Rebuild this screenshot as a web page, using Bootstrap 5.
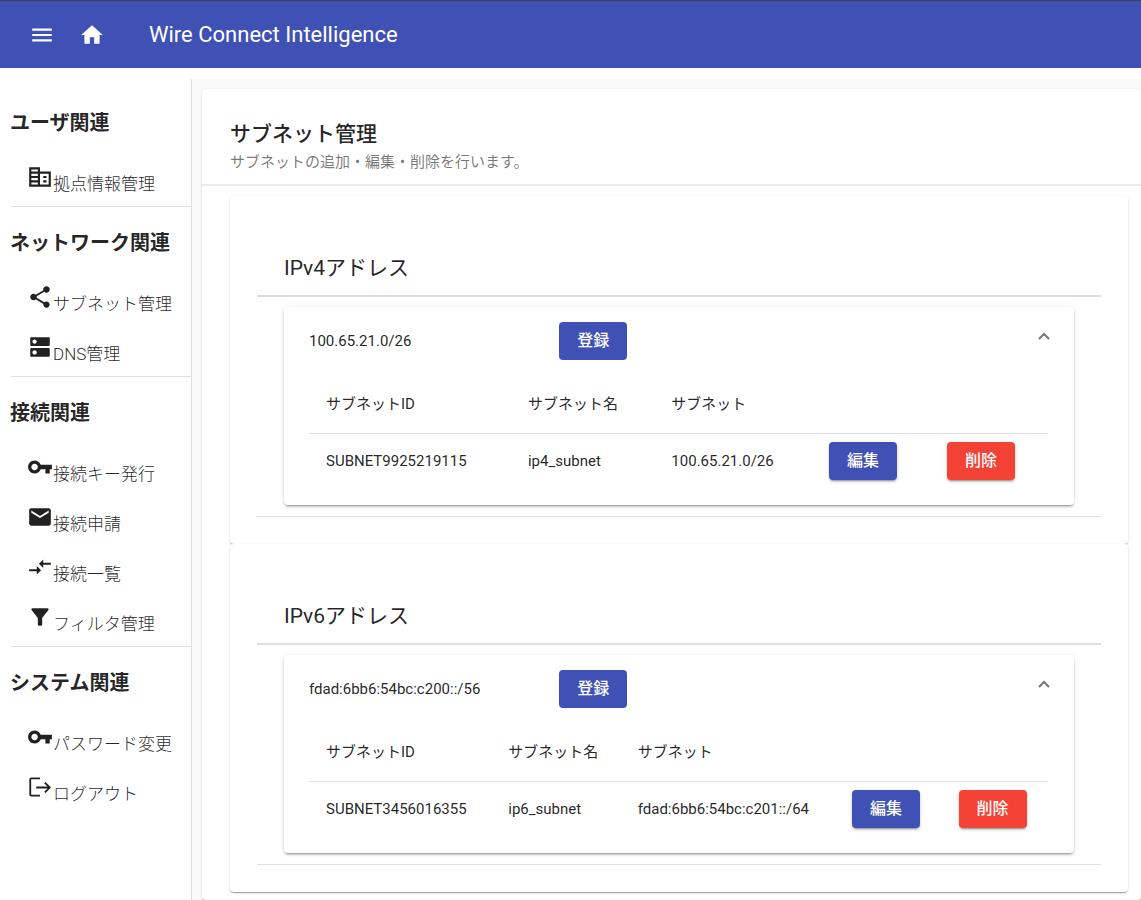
<!DOCTYPE html>
<html lang="ja">
<head>
<meta charset="utf-8">
<meta name="viewport" content="width=device-width, initial-scale=1">
<title>Wire Connect Intelligence</title>
<link href="https://cdn.jsdelivr.net/npm/bootstrap@5.3.0/dist/css/bootstrap.min.css" rel="stylesheet">
<style>
  body { font-family: Roboto, "Noto Sans CJK JP", sans-serif; font-size: 15px; line-height: 20px; color: rgba(0,0,0,.87); background: #fff; }
  svg { display: block; fill: currentColor; flex: none; }
  .topbar { background: #3f51b5; border-top: 1px solid #3b4151; height: 68px; padding: 0 29px; color: #fff; }
  .topbar .icon-btn { padding: 0; border: 0; background: none; color: inherit; }
  .brand { font-size: 22px; line-height: 28px; font-weight: 400; color: inherit; margin-left: 44px; }
  .brand, .side-link { text-decoration: none; }
  .shell { margin-top: 11px; min-height: calc(100vh - 79px); }
  .sidebar { width: 192px; flex: none; padding: 8px 0 0 10px; border-right: 1px solid #e0e0e0; }
  .side-group { border-bottom: 1px solid #e0e0e0; margin-left: 1px; }
  .side-group:last-child { border-bottom: 0; }
  .side-group h2 { font-size: 20px; line-height: 24px; font-weight: 700; margin: 0 0 0 -1px; padding: 24px 0 21px; white-space: nowrap; }
  .side-link { display: flex; height: 50px; padding: 8px 0 0 16px; color: rgba(0,0,0,.87); font-size: 17px; line-height: 24px; font-weight: 300; white-space: nowrap; }
  .side-link span { padding-top: 8px; }
  .content-area { background: #fafafa; padding: 10px 0 0 10px; min-width: 0; }
  .sheet { background: #fff; border-radius: 4px; box-shadow: 0 2px 1px -1px rgba(0,0,0,.2), 0 1px 1px rgba(0,0,0,.14), 0 1px 3px rgba(0,0,0,.12); }
  .page-sheet { min-height: 100%; }
  .page-head { padding: 31px 28px 10px; border-bottom: 2px solid #ececec; }
  .page-head h1, .block-title { font-size: 21px; line-height: 28px; font-weight: 400; margin: 0; }
  .page-head h1 { font-weight: 500; }
  .page-head p { margin: 0; line-height: 24px; color: rgba(0,0,0,.54); padding-top: 2px; }
  .blocks { padding: 10px 13px 8px 28px; }
  .block-sheet { padding: 58px 27px 27px; }
  .block-title { padding: 0 27px 13px; border-bottom: 2px solid #dedede; }
  .block-body { padding: 10px 27px 11px; border-bottom: 1px solid #e0e0e0; }
  .panel { border-radius: 4px; background: #fff; padding: 0 26px 16px 25px; box-shadow: 0 3px 1px -2px rgba(0,0,0,.2), 0 2px 2px rgba(0,0,0,.14), 0 1px 5px rgba(0,0,0,.12); }
  .panel-head { height: 68px; }
  .chevron { border: 0; background: none; padding: 0 0 10px; color: rgba(0,0,0,.54); }
  .action { width: 68px; height: 38px; padding: 0; border: 0; border-radius: 4px; color: #fff; font-size: 16px; line-height: 24px; font-weight: 500; box-shadow: 0 3px 1px -2px rgba(0,0,0,.2), 0 2px 2px rgba(0,0,0,.14), 0 1px 5px rgba(0,0,0,.12); }
  .action:hover { color: #fff; filter: brightness(1.1); }
  .action-main { background: #3f51b5; }
  .action-warn { background: #f44336; }
  .panel-head .action { box-shadow: none; }
  .subnets { margin: 0; width: 100%; }
  .subnets th, .subnets td { padding: 0 17px; vertical-align: middle; text-align: left; white-space: nowrap; }
  .subnets th { height: 58px; font-weight: 400; border-bottom: 1px solid #e0e0e0; }
  .subnets td { height: 56px; }
</style>
</head>
<body>
<header class="topbar d-flex align-items-center">
  <button class="icon-btn" type="button" aria-label="メニュー"><svg width="26" height="26" viewBox="0 0 24 24"><path d="M3 18h18v-2H3v2zm0-5h18v-2H3v2zm0-7v2h18V6H3z"/></svg></button>
  <button class="icon-btn ms-4" type="button" aria-label="ホーム"><svg width="26" height="26" viewBox="0 0 24 24"><path d="M10 20v-6h4v6h5v-8h3L12 3 2 12h3v8z"/></svg></button>
  <a class="brand" href="#">Wire Connect Intelligence</a>
</header>

<div class="shell d-flex">
  <nav class="sidebar" aria-label="メインメニュー">
    <section class="side-group">
      <h2>ユーザ関連</h2>
      <a class="side-link" href="#"><svg width="26" height="26" viewBox="0 0 24 24"><path fill-rule="evenodd" d="M2 3h10v4h10v14H2V3zM4 5v2h6V5H4zm0 4v2h6V9H4zm0 4v2h6v-2H4zm0 4v2h6v-2H4zM12 9v10h8V9h-8zM15 11h3v2h-3v-2zm0 4h3v2h-3v-2z"/></svg><span>拠点情報管理</span></a>
    </section>
    <section class="side-group">
      <h2>ネットワーク関連</h2>
      <a class="side-link" href="#"><svg width="26" height="26" viewBox="0 0 24 24"><path d="M18 16.08c-.76 0-1.44.3-1.96.77L8.91 12.7c.05-.23.09-.46.09-.7s-.04-.47-.09-.7l7.05-4.11c.54.5 1.25.81 2.04.81 1.66 0 3-1.34 3-3s-1.34-3-3-3-3 1.34-3 3c0 .24.04.47.09.7L8.04 9.81C7.5 9.31 6.79 9 6 9c-1.66 0-3 1.34-3 3s1.34 3 3 3c.79 0 1.5-.31 2.04-.81l7.12 4.16c-.05.21-.08.43-.08.65 0 1.61 1.31 2.92 2.92 2.92s2.92-1.31 2.92-2.92-1.31-2.92-2.92-2.92z"/></svg><span>サブネット管理</span></a>
      <a class="side-link" href="#"><svg width="26" height="26" viewBox="0 0 24 24"><path d="M20 13H4c-.55 0-1 .45-1 1v6c0 .55.45 1 1 1h16c.55 0 1-.45 1-1v-6c0-.55-.45-1-1-1zM7 19c-1.1 0-2-.9-2-2s.9-2 2-2 2 .9 2 2-.9 2-2 2zM20 3H4c-.55 0-1 .45-1 1v6c0 .55.45 1 1 1h16c.55 0 1-.45 1-1V4c0-.55-.45-1-1-1zM7 9c-1.1 0-2-.9-2-2s.9-2 2-2 2 .9 2 2-.9 2-2 2z"/></svg><span>DNS管理</span></a>
    </section>
    <section class="side-group">
      <h2>接続関連</h2>
      <a class="side-link" href="#"><svg width="26" height="26" viewBox="0 0 24 24"><path d="M12.65 10C11.83 7.67 9.61 6 7 6c-3.31 0-6 2.69-6 6s2.69 6 6 6c2.61 0 4.83-1.67 5.65-4H17v4h4v-4h2v-4H12.65zM7 15c-1.65 0-3-1.35-3-3s1.35-3 3-3 3 1.35 3 3-1.35 3-3 3z"/></svg><span>接続キー発行</span></a>
      <a class="side-link" href="#"><svg width="26" height="26" viewBox="0 0 24 24"><path d="M20 4H4c-1.1 0-2 .9-2 2v12c0 1.1.9 2 2 2h16c1.1 0 2-.9 2-2V6c0-1.1-.9-2-2-2zm0 4l-8 5-8-5V6l8 5 8-5v2z"/></svg><span>接続申請</span></a>
      <a class="side-link" href="#"><svg width="26" height="26" viewBox="0 0 24 24"><path d="M9.01 14H2v2h7.01v3L13 15l-3.99-4v3zm5.98-1v-3H22V8h-7.01V5L11 9l3.99 4z"/></svg><span>接続一覧</span></a>
      <a class="side-link" href="#"><svg width="26" height="26" viewBox="0 0 24 24"><path d="M4.25 5.61C6.27 8.2 10 13 10 13v6c0 .55.45 1 1 1h2c.55 0 1-.45 1-1v-6s3.72-4.8 5.74-7.39c.51-.66.04-1.61-.79-1.61H5.04c-.83 0-1.3.95-.79 1.61z"/></svg><span>フィルタ管理</span></a>
    </section>
    <section class="side-group">
      <h2>システム関連</h2>
      <a class="side-link" href="#"><svg width="26" height="26" viewBox="0 0 24 24"><path d="M12.65 10C11.83 7.67 9.61 6 7 6c-3.31 0-6 2.69-6 6s2.69 6 6 6c2.61 0 4.83-1.67 5.65-4H17v4h4v-4h2v-4H12.65zM7 15c-1.65 0-3-1.35-3-3s1.35-3 3-3 3 1.35 3 3-1.35 3-3 3z"/></svg><span>パスワード変更</span></a>
      <a class="side-link" href="#"><svg width="26" height="26" viewBox="0 0 24 24"><path d="M12 4H4Q3 4 3 5V19Q3 20 4 20H12M8.500 12.500H21M16.500 8L21 12.500l-4.500 4.500" fill="none" stroke="currentColor" stroke-width="1.700"/></svg><span>ログアウト</span></a>
    </section>
  </nav>

  <main class="content-area flex-grow-1">
    <div class="sheet page-sheet">
      <div class="page-head">
        <h1>サブネット管理</h1>
        <p>サブネットの追加・編集・削除を行います。</p>
      </div>
      <div class="blocks">
        <section class="sheet block-sheet">
          <h2 class="block-title">IPv4アドレス</h2>
          <div class="block-body">
            <div class="panel">
              <div class="panel-head d-flex align-items-center">
                <div class="col-4">100.65.21.0/26</div>
                <button class="btn action action-main ms-1" type="button">登録</button>
                <button class="chevron ms-auto" type="button" aria-label="閉じる" aria-expanded="true"><svg width="8" height="16" viewBox="0 0 8 16" overflow="visible"><path d="M-1 11L4 6l5 5" fill="none" stroke="currentColor" stroke-width="2"/></svg></button>
              </div>
              <table class="subnets">
                <thead><tr><th>サブネットID</th><th>サブネット名</th><th>サブネット</th><th></th><th></th></tr></thead>
                <tbody><tr><td>SUBNET9925219115</td><td>ip4_subnet</td><td>100.65.21.0/26</td><td><button class="btn action action-main" type="button">編集</button></td><td><button class="btn action action-warn" type="button">削除</button></td></tr></tbody>
              </table>
            </div>
          </div>
        </section>
        <section class="sheet block-sheet">
          <h2 class="block-title">IPv6アドレス</h2>
          <div class="block-body">
            <div class="panel">
              <div class="panel-head d-flex align-items-center">
                <div class="col-4">fdad:6bb6:54bc:c200::/56</div>
                <button class="btn action action-main ms-1" type="button">登録</button>
                <button class="chevron ms-auto" type="button" aria-label="閉じる" aria-expanded="true"><svg width="8" height="16" viewBox="0 0 8 16" overflow="visible"><path d="M-1 11L4 6l5 5" fill="none" stroke="currentColor" stroke-width="2"/></svg></button>
              </div>
              <table class="subnets">
                <thead><tr><th>サブネットID</th><th>サブネット名</th><th>サブネット</th><th></th><th></th></tr></thead>
                <tbody><tr><td>SUBNET3456016355</td><td>ip6_subnet</td><td>fdad:6bb6:54bc:c201::/64</td><td><button class="btn action action-main" type="button">編集</button></td><td><button class="btn action action-warn" type="button">削除</button></td></tr></tbody>
              </table>
            </div>
          </div>
        </section>
      </div>
    </div>
  </main>
</div>
<script src="https://cdn.jsdelivr.net/npm/bootstrap@5.3.0/dist/js/bootstrap.bundle.min.js"></script>
</body>
</html>
